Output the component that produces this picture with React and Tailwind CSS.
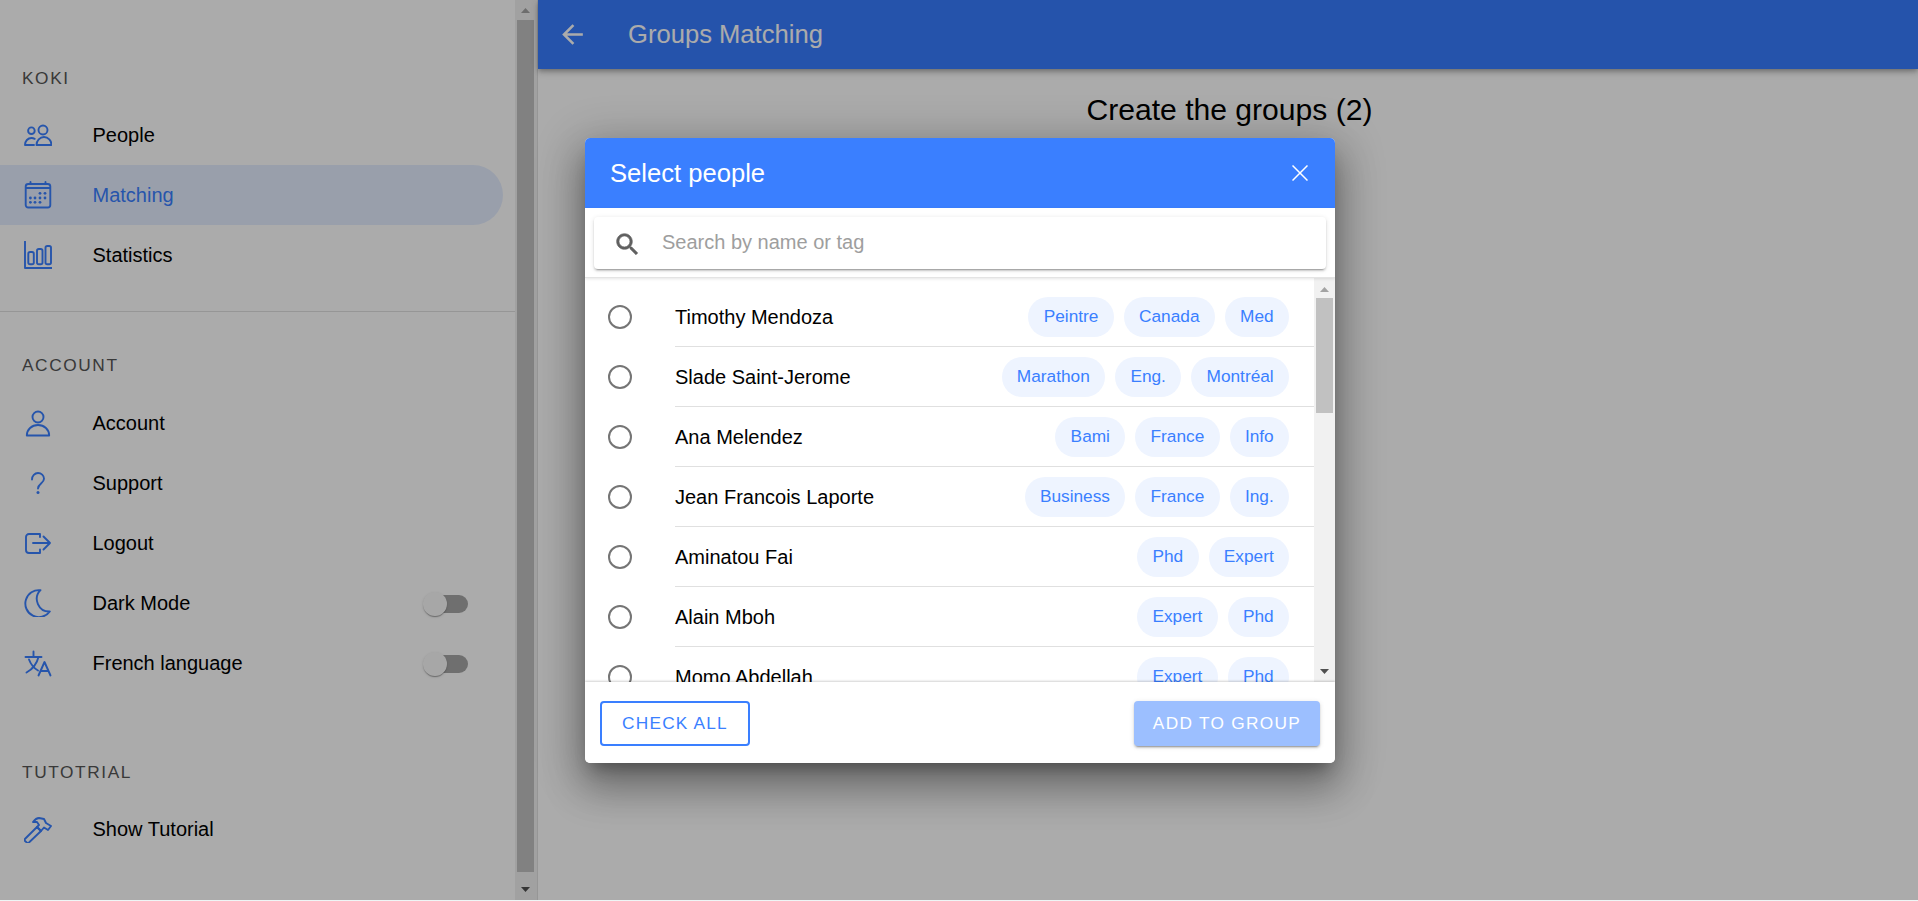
import React from "react";

const people = [
    { name: "Timothy Mendoza", tags: ["Peintre", "Canada", "Med"] },
    { name: "Slade Saint-Jerome", tags: ["Marathon", "Eng.", "Montréal"] },
    { name: "Ana Melendez", tags: ["Bami", "France", "Info"] },
    { name: "Jean Francois Laporte", tags: ["Business", "France", "Ing."] },
    { name: "Aminatou Fai", tags: ["Phd", "Expert"] },
    { name: "Alain Mboh", tags: ["Expert", "Phd"] },
    { name: "Momo Abdellah", tags: ["Expert", "Phd"] },
];

function Icon({ children }) {
    return (
        <svg width="28" height="28" viewBox="0 0 28 28" fill="none" stroke="#3a7fff" strokeWidth="1.9" strokeLinecap="round" strokeLinejoin="round">
            {children}
        </svg>
    );
}

const PeopleIcon = () => (
    <Icon>
        <circle cx="7.4" cy="9.7" r="3.3" />
        <circle cx="19" cy="9" r="4.5" />
        <path d="M12.5 24h15c0-4.5-3.4-8-7.5-8s-7.5 3.5-7.5 8z" />
        <path d="M10 24H1c0-4 2.8-7 6.5-7 1.2 0 2.3.3 3.2.8" />
    </Icon>
);

const CalendarIcon = () => (
    <Icon>
        <rect x="1.7" y="3" width="24.6" height="23.5" rx="2.5" />
        <path d="M2 7h24M6.5 1v2M21.5 1v2" />
        <g fill="#3a7fff" stroke="none">
            <circle cx="16" cy="12.3" r="1.4" />
            <circle cx="21" cy="12.3" r="1.4" />
            <circle cx="6.4" cy="17" r="1.4" />
            <circle cx="11" cy="17" r="1.4" />
            <circle cx="16" cy="17" r="1.4" />
            <circle cx="21" cy="17" r="1.4" />
            <circle cx="6.4" cy="21.3" r="1.4" />
            <circle cx="11" cy="21.3" r="1.4" />
            <circle cx="16" cy="21.3" r="1.4" />
        </g>
    </Icon>
);

const ChartIcon = () => (
    <Icon>
        <path d="M1 .5V27h27" />
        <rect x="4.3" y="11" width="5.5" height="12.3" rx="1.8" />
        <rect x="13" y="8" width="5.5" height="15.3" rx="1.8" />
        <rect x="21.5" y="5" width="5.5" height="18.3" rx="1.8" />
    </Icon>
);

const PersonIcon = () => (
    <Icon>
        <circle cx="14" cy="8" r="5.5" />
        <path d="M2.8 26.5c0-6 5-10.5 11.2-10.5s11.2 4.5 11.2 10.5z" />
    </Icon>
);

const QuestionIcon = () => (
    <Icon>
        <path d="M8 10.5c0-3.8 2.8-6.5 6-6.5s6 2.5 6 5.8c0 4.5-6 5-6 9.7" />
        <circle cx="14" cy="23.5" r="1.5" fill="#3a7fff" stroke="none" />
    </Icon>
);

const LogoutIcon = () => (
    <Icon>
        <path d="M16 8V5H5a3 3 0 0 0-3 3v13a3 3 0 0 0 3 3h11v-3.5" />
        <path d="M9 14h17M19.5 7.5L26 14l-6.5 6.5" />
    </Icon>
);

const MoonIcon = () => (
    <Icon>
        <path d="M16.5 1.2A13.5 13.5 0 1 0 25.8 22.5A12.5 12.5 0 0 1 16.5 1.2z" />
    </Icon>
);

const TranslateIcon = () => (
    <Icon>
        <path d="M1.5 8h16M9.5 2.5V8M14.5 8c-1.5 6-5.5 12-12 15.5M5 10.5c1.5 4 5.5 9 9 11" />
        <path d="M14.5 26.5L20.5 13l6 13.5M16.5 22h8" />
    </Icon>
);

const HammerIcon = () => (
    <Icon>
        <path d="M.9 24L13 12l4 4L5 27.5q-1.2.7-2.2 0L1 26q-.8-1-.1-2z" />
        <path d="M9 7q3-4 6-4l5 1 2 4 5 3-3 4-4-2.5-3 3.5-4-4 2-2-2-3z" />
    </Icon>
);

function Switch() {
    return (
        <div className="relative ml-auto mr-[35px] mt-[2px] w-[44px] h-[18px] rounded-full bg-[#a6a6a6]">
            <div className="absolute -left-px -top-[3px] w-6 h-6 rounded-full bg-[#fafafa] shadow-[0_2px_1px_-1px_rgba(0,0,0,0.2),0_1px_1px_0_rgba(0,0,0,0.14),0_1px_3px_0_rgba(0,0,0,0.12)]"></div>
        </div>
    );
}

function NavItem({ icon, label, active, toggle }) {
    return (
        <div className={`flex items-center h-[60px] w-[503px] pl-6 text-[20px] rounded-r-[30px] ${active ? "bg-[#e5eeff] text-[#3a7fff]" : "text-black"}`}>
            <div className="w-[68.5px] flex">{icon}</div>
            <span>{label}</span>
            {toggle && <Switch />}
        </div>
    );
}

function SectionLabel({ children }) {
    return <div className="h-[34px] pl-[22px] pt-[3px] flex items-center text-[17.28px] tracking-[1.6px] uppercase text-[#555555]">{children}</div>;
}

function Arrow({ up, color }) {
    return (
        <svg width="9" height="5" viewBox="0 0 9 5" className="block shrink-0">
            <polygon points={up ? "4.5,0 9,5 0,5" : "0,0 9,0 4.5,5"} fill={color} />
        </svg>
    );
}

function Sidebar() {
    return (
        <aside className="flex w-[538px] shrink-0 h-full border-r border-[#e0e0e0] bg-white">
            <div className="w-[515px] pt-[60px]">
                <SectionLabel>Koki</SectionLabel>
                <div className="mt-[11px]">
                    <NavItem icon={<PeopleIcon />} label="People" />
                    <NavItem icon={<CalendarIcon />} label="Matching" active />
                    <NavItem icon={<ChartIcon />} label="Statistics" />
                </div>
                <div className="mt-[26px] h-px bg-[#e0e0e0]"></div>
                <div className="mt-[35px]">
                    <SectionLabel>Account</SectionLabel>
                </div>
                <div className="mt-3">
                    <NavItem icon={<PersonIcon />} label="Account" />
                    <NavItem icon={<QuestionIcon />} label="Support" />
                    <NavItem icon={<LogoutIcon />} label="Logout" />
                    <NavItem icon={<MoonIcon />} label="Dark Mode" toggle />
                    <NavItem icon={<TranslateIcon />} label="French language" toggle />
                </div>
                <div className="mt-[61px]">
                    <SectionLabel>Tutotrial</SectionLabel>
                </div>
                <div className="mt-[11px]">
                    <NavItem icon={<HammerIcon />} label="Show Tutorial" />
                </div>
            </div>
            <div className="w-[22px] bg-[#f1f1f1] flex flex-col pl-[2px]">
                <div className="w-[17px] flex flex-col items-center pt-2">
                    <Arrow up color="#a3a3a3" />
                    <div className="w-[17px] h-[852px] mt-[7px] bg-[#c1c1c1]"></div>
                    <div className="mt-[15px]">
                        <Arrow color="#505050" />
                    </div>
                </div>
            </div>
        </aside>
    );
}

function PersonRow({ person }) {
    return (
        <div className="flex h-[60px] shrink-0">
            <div className="w-[90px] pl-[23px] flex items-center">
                <div className="w-6 h-6 rounded-full border-2 border-[#757575]"></div>
            </div>
            <div className="flex-1 flex items-center justify-between border-b border-[#e0e0e0] pr-[25px]">
                <span className="text-[20px] text-black">{person.name}</span>
                <div className="flex gap-[10px]">
                    {person.tags.map((tag) => (
                        <span key={tag} className="h-10 px-[15.3px] flex items-center rounded-full bg-[#eef4ff] text-[#3a7fff] text-[17.28px]">{tag}</span>
                    ))}
                </div>
            </div>
        </div>
    );
}

function SelectDialog() {
    return (
        <div className="w-[750px] h-[625px] flex flex-col overflow-hidden rounded-[5px] bg-white shadow-[0_11px_15px_-7px_rgba(0,0,0,0.3),0_24px_38px_3px_rgba(0,0,0,0.25),0_9px_46px_8px_rgba(0,0,0,0.2)]">
            <div className="h-[70px] shrink-0 pl-[25px] pr-[27px] flex items-center justify-between bg-[#3a7fff] text-white">
                <span className="text-[25.6px]">Select people</span>
                <svg width="16" height="16" viewBox="0 0 16 16" stroke="#ffffff" strokeWidth="1.5">
                    <path d="M.5.5l15 15M15.5.5l-15 15" />
                </svg>
            </div>
            <div className="relative z-10 h-[70px] shrink-0 px-[9px] pt-[9px] bg-white border-b border-[#e4e4e4] shadow-[0_1px_3px_rgba(0,0,0,0.1)]">
                <div className="h-[52px] pl-[19px] flex items-center gap-[20px] rounded bg-white shadow-[0_3px_1px_-2px_rgba(0,0,0,0.2),0_2px_2px_0_rgba(0,0,0,0.14),0_1px_5px_0_rgba(0,0,0,0.12)]">
                    <svg width="29" height="29" viewBox="0 0 24 24" fill="#616161" stroke="#616161" strokeWidth="0.5" className="mt-[2px]">
                        <path d="M15.5 14h-.79l-.28-.27C15.41 12.59 16 11.11 16 9.5 16 5.91 13.09 3 9.5 3S3 5.91 3 9.5 5.91 16 9.5 16c1.61 0 3.09-.59 4.23-1.57l.27.28v.79l5 4.99L20.49 19l-4.99-5zm-6 0C7.01 14 5 11.99 5 9.5S7.01 5 9.5 5 14 7.01 14 9.5 11.99 14 9.5 14z" />
                    </svg>
                    <span className="text-[20px] text-[#9e9e9e] -mt-[2px]">Search by name or tag</span>
                </div>
            </div>
            <div className="flex-1 flex min-h-0">
                <div className="flex-1 flex flex-col pt-[9px] overflow-hidden">
                    {people.map((person) => (
                        <PersonRow key={person.name} person={person} />
                    ))}
                </div>
                <div className="w-[21px] shrink-0 bg-[#f1f1f1] flex flex-col items-center pt-[9px] pb-[8px]">
                    <Arrow up color="#a3a3a3" />
                    <div className="w-[17px] h-[115px] mt-[6px] bg-[#c1c1c1]"></div>
                    <div className="mt-auto">
                        <Arrow color="#505050" />
                    </div>
                </div>
            </div>
            <div className="relative z-10 h-[81px] shrink-0 px-[15px] pt-[19px] flex items-start justify-between bg-white shadow-[0_-1px_2px_rgba(0,0,0,0.18)]">
                <button className="w-[150px] h-[45px] rounded border-2 border-[#3a7fff] text-[#3a7fff] text-[17.28px] tracking-[1.2px]">CHECK ALL</button>
                <button className="w-[186px] h-[45px] rounded bg-[#9cbfff] text-white text-[17.28px] tracking-[1.3px] shadow-[0_3px_1px_-2px_rgba(0,0,0,0.2),0_2px_2px_0_rgba(0,0,0,0.14),0_1px_5px_0_rgba(0,0,0,0.12)]">ADD TO GROUP</button>
            </div>
        </div>
    );
}

export default function App() {
    return (
        <div className="relative h-[901px] w-[1918px] overflow-hidden bg-[#eef5f5] font-['Liberation_Sans',Arial,sans-serif]">
            <div className="flex h-[900px] bg-white">
                <Sidebar />
                <main className="flex-1 flex flex-col">
                    <header className="h-[69px] shrink-0 flex items-center pl-[19px] bg-[#387dff] text-white shadow-[0_2px_4px_-1px_rgba(0,0,0,0.2),0_4px_5px_0_rgba(0,0,0,0.14),0_1px_10px_0_rgba(0,0,0,0.12)]">
                        <svg width="31" height="31" viewBox="0 0 24 24" fill="#ffffff">
                            <path d="M20 11H7.83l5.59-5.59L12 4l-8 8 8 8 1.41-1.41L7.83 13H20v-2z" />
                        </svg>
                        <span className="ml-[40px] text-[25.6px]">Groups Matching</span>
                    </header>
                    <h1 className="mt-[24px] pl-[3px] text-center text-[30.1px] leading-[34px] text-black">Create the groups (2)</h1>
                </main>
            </div>
            <div className="absolute inset-x-0 top-0 h-[900px] pl-[2px] pt-px flex items-center justify-center bg-[rgba(0,0,0,0.33)]">
                <SelectDialog />
            </div>
        </div>
    );
}
